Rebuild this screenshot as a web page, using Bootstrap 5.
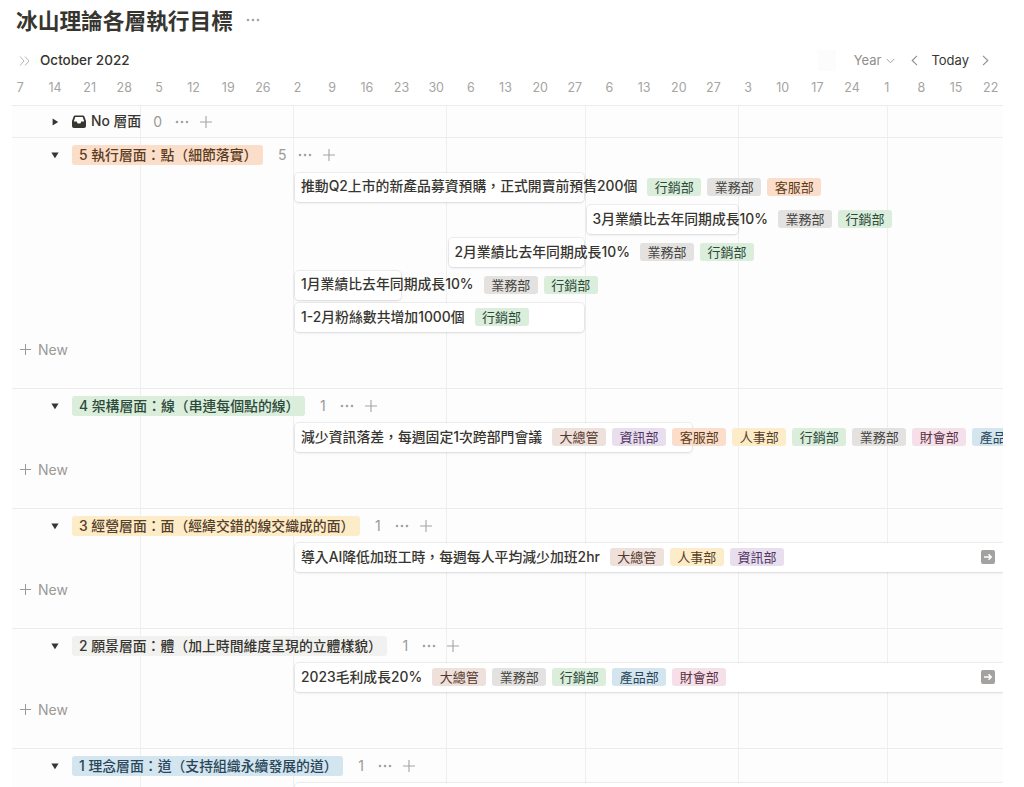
<!DOCTYPE html>
<html lang="zh-Hant">
<head>
    <meta charset="UTF-8">
    <title>冰山理論各層執行目標</title>
    <link href="https://cdn.jsdelivr.net/npm/bootstrap@5.3.0/dist/css/bootstrap.min.css" rel="stylesheet">
    <style>
        html, body { height: 787px; overflow: hidden; }
        body { background: #fff; color: #37352f; font-family: Inter, "Noto Sans CJK TC", sans-serif; }
        svg { display: block; flex: none; }
        .page-title { height: 50px; padding: 4px 0 0 16px; }
        .page-title h1 { font-size: 21.7px; font-weight: 700; line-height: 34px; margin: 0; }
        .title-dots { margin-left: 13px; margin-top: 14px; }
        .tool-bar { height: 21px; padding: 0 35px 0 19px; font-size: 13px; }
        .month-name { font-size: 13.5px; font-weight: 500; margin-left: 10px; }
        .view-name { color: #8f8e8b; margin-right: 5px; }
        .today-btn { font-weight: 400; margin: 0 13px; }
        .ghost-box { width: 18px; height: 21px; background: #fcfcfc; margin-right: 18px; }
        .tick-row { height: 34px; padding: 7px 0 0 3px; font-size: 12.5px; color: #a5a4a1; width: 1003px; }
        .tick-row span { width: 34.66px; flex: none; text-align: center; line-height: 20px; }
        .tl-wrap { position: relative; margin-left: 12px; width: 991px; height: 682px; overflow: hidden; background: #fdfdfd; border-top: 1px solid #ececeb; }
        .grid-line { position: absolute; top: 0; bottom: 0; width: 1px; background: #efefef; }
        .tl-group { position: relative; border-bottom: 1px solid #ececeb; }
        .group-head { height: 34px; padding: 0 0 1px 39px; font-size: 13.85px; font-weight: 500; }
        .group-head.head-none { height: 31px; padding-bottom: 0; }
        .head-tag { height: 20px; line-height: 20px; margin-left: 13px; padding: 0 5.5px 0 7px; border-radius: 3px; white-space: nowrap; }
        .head-box { margin-left: 13px; }
        .head-plain { margin-left: 5px; white-space: nowrap; }
        .head-count { color: #9b9a97; font-size: 14px; font-weight: 400; margin-left: 15px; width: 14px; }
        .head-none .head-count { margin-left: 12px; width: 16px; }
        .head-dots { margin-left: 6px; }
        .head-plus { margin-left: 10px; }
        .tl-bar { height: 29px; margin-bottom: 3.67px; padding: 0 6px 1px; background: #fff; border-radius: 4px; box-shadow: 0 0 0 1px rgba(15,15,15,.06), 0 1px 3px rgba(15,15,15,.1); font-size: 13.85px; font-weight: 500; white-space: nowrap; }
        .tl-bar.tl-open { border-radius: 4px 0 0 4px; padding-right: 8px; }
        .bar-first { margin-top: .6px; }
        .bar-name { margin-right: 4px; flex: none; }
        .dept-tag { flex: none; height: 18px; line-height: 18px; padding: 0 7.5px; margin-left: 6px; border-radius: 3px; font-size: 13px; font-weight: 400; }
        .go-icon { margin-left: auto; }
        .new-row { height: 20px; margin-top: 7px; margin-bottom: 29px; padding-left: 7px; color: #9b9a97; font-size: 14px; }
        .new-row svg { margin-right: 6px; }
        .c-green { background: #dbeddb; color: #2b4a39; }
        .c-gray { background: #e3e2e0; color: #45433f; }
        .c-orange { background: #fadec9; color: #5c3c22; }
        .c-yellow { background: #fdecc8; color: #55402a; }
        .c-pink { background: #f5e0e9; color: #5c3347; }
        .c-blue { background: #d3e5ef; color: #2a4558; }
        .c-purple { background: #e8deee; color: #503563; }
        .c-brown { background: #eee0da; color: #54382c; }
        .c-light { background: #f1f1ef; color: #37352f; }
    </style>
</head>
<body>

<svg width="0" height="0" class="position-absolute">
    <symbol id="ic-dots" viewBox="0 0 14 4"><circle cx="2" cy="2" r="1.3"/><circle cx="7" cy="2" r="1.3"/><circle cx="12" cy="2" r="1.3"/></symbol>
    <symbol id="ic-plus" viewBox="0 0 14 14"><path d="M7 1v12M1 7h12" stroke="currentColor" stroke-width="1.1" fill="none"/></symbol>
    <symbol id="ic-open" viewBox="0 0 10 10"><path d="M0.5 2h9L5 9z"/></symbol>
    <symbol id="ic-shut" viewBox="0 0 10 10"><path d="M2 0.5v9L9 5z"/></symbol>
    <symbol id="ic-go" viewBox="0 0 14 14"><rect width="14" height="14" rx="2" fill="#a3a2a0"/><path d="M3 7h7M7.5 4.2L10.3 7 7.5 9.8" stroke="#fff" stroke-width="1.5" fill="none"/></symbol>
</svg>

<div class="page-title d-flex align-items-start">
    <h1>冰山理論各層執行目標</h1>
    <svg class="title-dots" width="14" height="4" fill="#a5a4a1"><use href="#ic-dots"/></svg>
</div>

<div class="tool-bar d-flex align-items-center">
    <svg width="11" height="10" viewBox="0 0 11 10" fill="none" stroke="#b5b4b1" stroke-width="1"><path d="M1 .5L5 5 1 9.5M6 .5L10 5 6 9.5"/></svg>
    <span class="month-name">October 2022</span>
    <div class="ghost-box ms-auto"></div>
    <span class="view-name">Year</span>
    <svg width="9" height="6" viewBox="0 0 9 6" fill="none" stroke="#a5a4a1" stroke-width="1"><path d="M.8 1l3.7 3.8L8.2 1"/></svg>
    <svg class="ms-3" width="7" height="11" viewBox="0 0 7 11" fill="none" stroke="#8f8e8b" stroke-width="1.1"><path d="M6 .8L1.2 5.5 6 10.2"/></svg>
    <span class="today-btn">Today</span>
    <svg width="7" height="11" viewBox="0 0 7 11" fill="none" stroke="#8f8e8b" stroke-width="1.1"><path d="M1 .8l4.8 4.7L1 10.2"/></svg>
</div>

<div class="tick-row d-flex">
    <span>7</span><span>14</span><span>21</span><span>28</span><span>5</span><span>12</span><span>19</span><span>26</span><span>2</span><span>9</span><span>16</span><span>23</span><span>30</span><span>6</span><span>13</span><span>20</span><span>27</span><span>6</span><span>13</span><span>20</span><span>27</span><span>3</span><span>10</span><span>17</span><span>24</span><span>1</span><span>8</span><span>15</span><span>22</span>
</div>

<div class="tl-wrap">
    <div class="grid-line" style="left: 128px"></div>
    <div class="grid-line" style="left: 281px"></div>
    <div class="grid-line" style="left: 434px"></div>
    <div class="grid-line" style="left: 573px"></div>
    <div class="grid-line" style="left: 726px"></div>
    <div class="grid-line" style="left: 875px"></div>

    <div class="tl-group">
        <div class="group-head head-none d-flex align-items-center">
            <svg width="8" height="8" fill="#37352f"><use href="#ic-shut"/></svg>
            <svg class="head-box" width="14" height="13" viewBox="0 0 14 13"><path d="M3 .5h8a1.5 1.5 0 0 1 1.4 1L14 6v5a2 2 0 0 1-2 2H2a2 2 0 0 1-2-2V6l1.6-4.500A1.500 1.500 0 0 1 3 .5z" fill="#37352f"/><path d="M3.300 2h7.400l1.500 4.400H9.200a2.200 2.200 0 0 1-4.400 0H1.800z" fill="#fff"/></svg>
            <span class="head-plain">No 層面</span>
            <span class="head-count">0</span>
            <svg class="head-dots" width="14" height="4" fill="#a5a4a1"><use href="#ic-dots"/></svg>
            <svg class="head-plus" width="14" height="14" color="#a5a4a1"><use href="#ic-plus"/></svg>
        </div>
    </div>

    <div class="tl-group">
        <div class="group-head d-flex align-items-center">
            <svg width="8" height="8" fill="#37352f"><use href="#ic-open"/></svg>
            <span class="head-tag c-orange">5 執行層面&#xFF1A;點&#xFF08;細節落實&#xFF09;</span>
            <span class="head-count">5</span>
            <svg class="head-dots" width="14" height="4" fill="#a5a4a1"><use href="#ic-dots"/></svg>
            <svg class="head-plus" width="14" height="14" color="#a5a4a1"><use href="#ic-plus"/></svg>
        </div>
        <div class="tl-bar bar-first d-flex align-items-center" style="margin-left: 283px; width: 289px">
            <span class="bar-name">推動Q2上市的新產品募資預購&#xFF0C;正式開賣前預售200個</span>
            <span class="dept-tag c-green">行銷部</span><span class="dept-tag c-gray">業務部</span><span class="dept-tag c-orange">客服部</span>
        </div>
        <div class="tl-bar d-flex align-items-center" style="margin-left: 574.5px; width: 151.5px">
            <span class="bar-name">3月業績比去年同期成長10%</span>
            <span class="dept-tag c-gray">業務部</span><span class="dept-tag c-green">行銷部</span>
        </div>
        <div class="tl-bar d-flex align-items-center" style="margin-left: 436.5px; width: 135.5px">
            <span class="bar-name">2月業績比去年同期成長10%</span>
            <span class="dept-tag c-gray">業務部</span><span class="dept-tag c-green">行銷部</span>
        </div>
        <div class="tl-bar d-flex align-items-center" style="margin-left: 283px; width: 106px">
            <span class="bar-name">1月業績比去年同期成長10%</span>
            <span class="dept-tag c-gray">業務部</span><span class="dept-tag c-green">行銷部</span>
        </div>
        <div class="tl-bar d-flex align-items-center" style="margin-left: 283px; width: 289px">
            <span class="bar-name">1-2月粉絲數共增加1000個</span>
            <span class="dept-tag c-green">行銷部</span>
        </div>
        <div class="new-row d-flex align-items-center">
            <svg width="13" height="13" color="#9b9a97"><use href="#ic-plus"/></svg>New
        </div>
    </div>

    <div class="tl-group">
        <div class="group-head d-flex align-items-center">
            <svg width="8" height="8" fill="#37352f"><use href="#ic-open"/></svg>
            <span class="head-tag c-green">4 架構層面&#xFF1A;線&#xFF08;串連每個點的線&#xFF09;</span>
            <span class="head-count">1</span>
            <svg class="head-dots" width="14" height="4" fill="#a5a4a1"><use href="#ic-dots"/></svg>
            <svg class="head-plus" width="14" height="14" color="#a5a4a1"><use href="#ic-plus"/></svg>
        </div>
        <div class="tl-bar d-flex align-items-center" style="margin-left: 283px; width: 397px">
            <span class="bar-name">減少資訊落差&#xFF0C;每週固定1次跨部門會議</span>
            <span class="dept-tag c-brown">大總管</span><span class="dept-tag c-purple">資訊部</span><span class="dept-tag c-orange">客服部</span><span class="dept-tag c-yellow">人事部</span><span class="dept-tag c-green">行銷部</span><span class="dept-tag c-gray">業務部</span><span class="dept-tag c-pink">財會部</span><span class="dept-tag c-blue">產品部</span>
        </div>
        <div class="new-row d-flex align-items-center">
            <svg width="13" height="13" color="#9b9a97"><use href="#ic-plus"/></svg>New
        </div>
    </div>

    <div class="tl-group">
        <div class="group-head d-flex align-items-center">
            <svg width="8" height="8" fill="#37352f"><use href="#ic-open"/></svg>
            <span class="head-tag c-yellow">3 經營層面&#xFF1A;面&#xFF08;經緯交錯的線交織成的面&#xFF09;</span>
            <span class="head-count">1</span>
            <svg class="head-dots" width="14" height="4" fill="#a5a4a1"><use href="#ic-dots"/></svg>
            <svg class="head-plus" width="14" height="14" color="#a5a4a1"><use href="#ic-plus"/></svg>
        </div>
        <div class="tl-bar tl-open d-flex align-items-center" style="margin-left: 283px">
            <span class="bar-name">導入AI降低加班工時&#xFF0C;每週每人平均減少加班2hr</span>
            <span class="dept-tag c-brown">大總管</span><span class="dept-tag c-yellow">人事部</span><span class="dept-tag c-purple">資訊部</span>
            <svg class="go-icon" width="14" height="14"><use href="#ic-go"/></svg>
        </div>
        <div class="new-row d-flex align-items-center">
            <svg width="13" height="13" color="#9b9a97"><use href="#ic-plus"/></svg>New
        </div>
    </div>

    <div class="tl-group">
        <div class="group-head d-flex align-items-center">
            <svg width="8" height="8" fill="#37352f"><use href="#ic-open"/></svg>
            <span class="head-tag c-light">2 願景層面&#xFF1A;體&#xFF08;加上時間維度呈現的立體樣貌&#xFF09;</span>
            <span class="head-count">1</span>
            <svg class="head-dots" width="14" height="4" fill="#a5a4a1"><use href="#ic-dots"/></svg>
            <svg class="head-plus" width="14" height="14" color="#a5a4a1"><use href="#ic-plus"/></svg>
        </div>
        <div class="tl-bar tl-open d-flex align-items-center" style="margin-left: 283px">
            <span class="bar-name">2023毛利成長20%</span>
            <span class="dept-tag c-brown">大總管</span><span class="dept-tag c-gray">業務部</span><span class="dept-tag c-green">行銷部</span><span class="dept-tag c-blue">產品部</span><span class="dept-tag c-pink">財會部</span>
            <svg class="go-icon" width="14" height="14"><use href="#ic-go"/></svg>
        </div>
        <div class="new-row d-flex align-items-center">
            <svg width="13" height="13" color="#9b9a97"><use href="#ic-plus"/></svg>New
        </div>
    </div>

    <div class="tl-group">
        <div class="group-head d-flex align-items-center">
            <svg width="8" height="8" fill="#37352f"><use href="#ic-open"/></svg>
            <span class="head-tag c-blue">1 理念層面&#xFF1A;道&#xFF08;支持組織永續發展的道&#xFF09;</span>
            <span class="head-count">1</span>
            <svg class="head-dots" width="14" height="4" fill="#a5a4a1"><use href="#ic-dots"/></svg>
            <svg class="head-plus" width="14" height="14" color="#a5a4a1"><use href="#ic-plus"/></svg>
        </div>
        <div class="tl-bar tl-open d-flex align-items-center" style="margin-left: 283px"></div>
    </div>
</div>

<script src="https://cdn.jsdelivr.net/npm/bootstrap@5.3.0/dist/js/bootstrap.bundle.min.js"></script>
</body>
</html>
